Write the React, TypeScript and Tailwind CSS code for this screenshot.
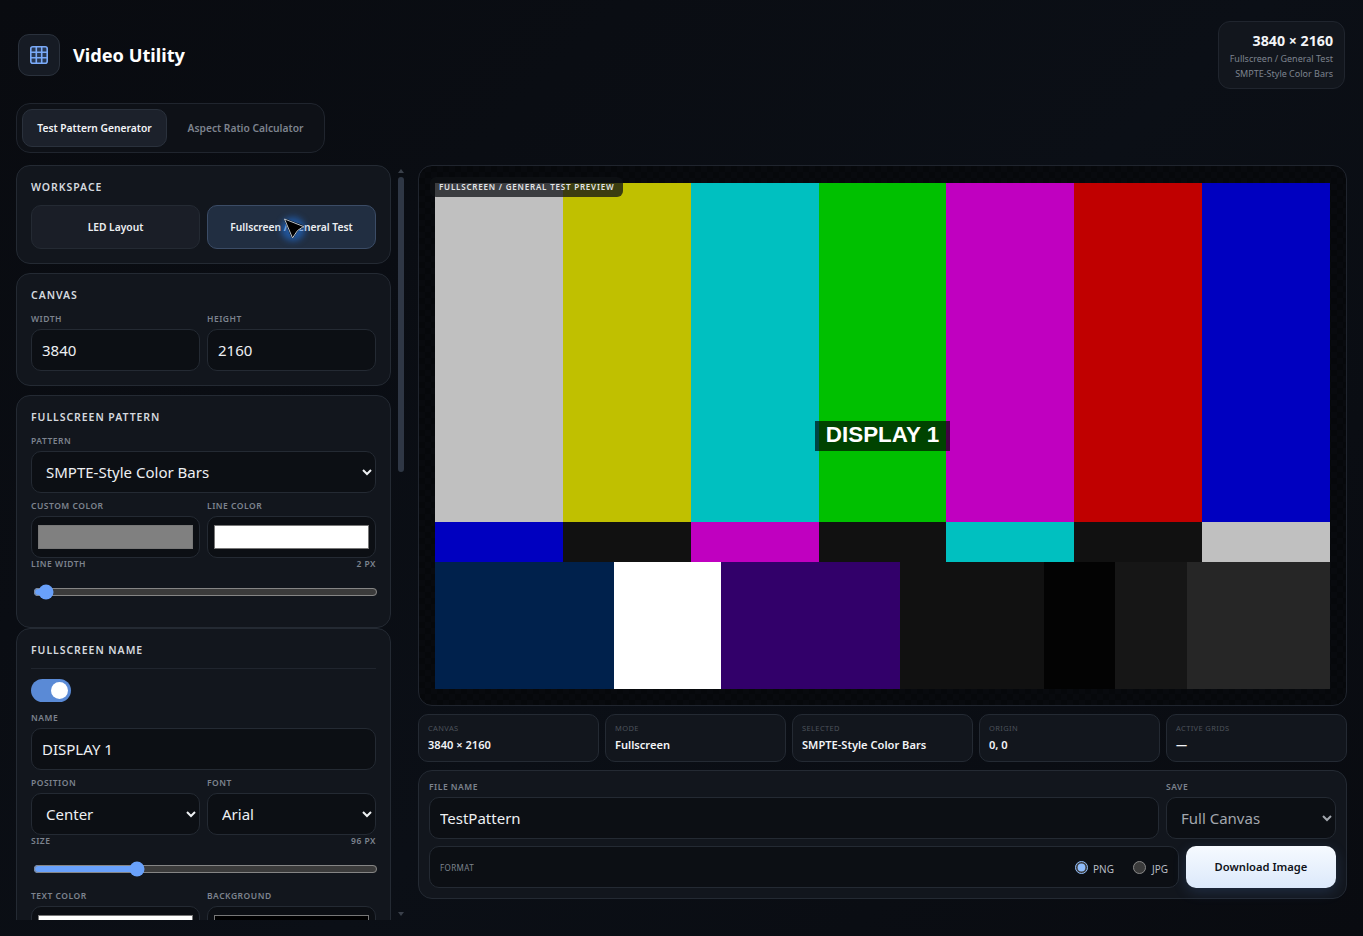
import React from "react";

const label = "block text-[8.5px] leading-[12px] font-semibold tracking-[0.06em] uppercase text-[#7d838e]";
const card = "rounded-[14px] border border-[#242a33] bg-[#12161d] px-[14px] shrink-0";
const fieldBase = "w-full h-[42px] rounded-[10px] border border-[#242a33] bg-[#0c0f14] text-[15px] outline-none";
const field = `${fieldBase} text-[#eef0f3]`;
const heading = "text-[10.5px] leading-[14px] font-semibold tracking-[0.09em] uppercase text-[#d5d9df]";
const slider = "mt-[14px] ml-[2px] block w-[345px] accent-[#69a1fb]";

function Swatch({ color, className = "" }: { color: string; className?: string }) {
  return (
    <div className={`h-[42px] rounded-[10px] border border-[#242a33] bg-[#0c0f14] px-[6px] py-[8px] ${className}`}>
      <div className="h-full w-full border border-[#777]" style={{ background: color }} />
    </div>
  );
}

function Stat({ k, v }: { k: string; v: string }) {
  return (
    <div className="h-[48px] flex-1 rounded-[10px] border border-[#242a33] bg-[#12161d] px-[9px] pt-[7px]">
      <div className="text-[7.5px] leading-[12px] tracking-[0.05em] uppercase text-[#4c525b]">{k}</div>
      <div className="mt-[3px] text-[11.1px] leading-[16px] font-semibold text-[#f2f4f7]">{v}</div>
    </div>
  );
}

const top = ["#c0c0c0", "#c0c000", "#00c0c0", "#00c000", "#c000c0", "#c00000", "#0000c0"];
const mid = ["#0000c0", "#111111", "#c000c0", "#111111", "#00c0c0", "#111111", "#c0c0c0"];
const bottom: [string, number][] = [
  ["#00214c", 5],
  ["#ffffff", 3],
  ["#32006a", 5],
  ["#111111", 4],
  ["#030303", 2],
  ["#161616", 2],
  ["#262626", 4],
];

export default function App() {
  return (
    <div className="h-[936px] w-[1363px] overflow-hidden bg-[linear-gradient(135deg,#090b10_0%,#0b0f16_55%,#090b10_100%)] font-['Noto_Sans',sans-serif] text-[#f2f4f7] [color-scheme:dark]">
      <header className="flex items-start justify-between pl-[18px] pr-[18px] pt-[21px]">
        <div className="mt-[13px] flex items-center gap-[13px]">
          <div className="flex h-[42px] w-[42px] items-center justify-center rounded-[11px] border border-[#2a313c] bg-[#161b24]">
            <svg width="18" height="18" viewBox="0 0 18 18" fill="none" stroke="#7aaaf8" strokeWidth="1.6">
              <rect x="0.8" y="0.8" width="16.4" height="16.4" rx="2" fill="#6ba0f5" fillOpacity="0.22" />
              <path d="M6.3 1v16M11.7 1v16M1 6.3h16M1 11.7h16" />
            </svg>
          </div>
          <h1 className="-mt-[1px] text-[18.2px] leading-[28px] font-bold text-white">Video Utility</h1>
        </div>
        <div className="h-[68px] w-[127px] rounded-[12px] border border-[#20252e] bg-[#12161d] pr-[11px] pt-[9px] text-right">
          <div className="text-[14.2px] leading-[20px] font-bold text-[#f2f4f7]">3840 × 2160</div>
          <div className="text-[9px] leading-[15px] text-[#7d838e]">Fullscreen / General Test</div>
          <div className="text-[9px] leading-[15px] text-[#7d838e]">SMPTE-Style Color Bars</div>
        </div>
      </header>

      <nav className="ml-[16px] mt-[14px] flex h-[50px] w-[309px] items-center gap-[5px] rounded-[14px] border border-[#20252e] bg-[#0e1117] px-[5px]">
        <button className="h-[38px] w-[145px] shrink-0 rounded-[10px] border border-[#2a313c] bg-[#1c212b] pt-[1px] text-[10.25px] font-semibold text-[#f2f4f7]">
          Test Pattern Generator
        </button>
        <button className="h-[38px] flex-1 rounded-[10px] pt-[1px] text-[10.25px] font-semibold text-[#7d838e]">
          Aspect Ratio Calculator
        </button>
      </nav>

      <main className="mt-[12px] flex items-start">
        <div className="ml-[16px] flex h-[755px] w-[390px] shrink-0 gap-[7px]">
          <aside className="flex h-full w-[375px] shrink-0 flex-col gap-[9px] overflow-hidden">
            <section className={`${card} h-[99px] pt-[14px]`}>
              <h2 className={heading}>Workspace</h2>
              <div className="mt-[11px] grid grid-cols-2 gap-[7px]">
                <button className="h-[44px] rounded-[10px] border border-[#242a33] bg-[#1a1e27] pt-[1px] text-[10.25px] font-semibold text-[#eceef1]">
                  LED Layout
                </button>
                <button className="h-[44px] rounded-[10px] border border-[#3b4c66] bg-[#212e41] pt-[1px] text-[10.25px] font-semibold text-[#eceef1]">
                  Fullscreen / General Test
                </button>
              </div>
            </section>

            <section className={`${card} h-[113px] pt-[14px]`}>
              <h2 className={heading}>Canvas</h2>
              <div className="mt-[11px] grid grid-cols-2 gap-[7px]">
                <div>
                  <label className={label}>Width</label>
                  <input readOnly value="3840" className={`${field} mt-[4px] px-[10px]`} />
                </div>
                <div>
                  <label className={label}>Height</label>
                  <input readOnly value="2160" className={`${field} mt-[4px] px-[10px]`} />
                </div>
              </div>
            </section>

            <section className={`${card} h-[233px] pt-[14px]`}>
              <h2 className={heading}>Fullscreen Pattern</h2>
              <label className={`${label} mt-[11px]`}>Pattern</label>
              <select className={`${field} mt-[4px] px-[10px]`}>
                <option>SMPTE-Style Color Bars</option>
              </select>
              <div className="mt-[7px] grid grid-cols-2 gap-[7px]">
                <div>
                  <label className={label}>Custom Color</label>
                  <Swatch color="#808080" className="mt-[4px]" />
                </div>
                <div>
                  <label className={label}>Line Color</label>
                  <Swatch color="#ffffff" className="mt-[4px]" />
                </div>
              </div>
              <div className="flex justify-between">
                <span className={label}>Line Width</span>
                <span className={label}>2 px</span>
              </div>
              <input type="range" readOnly min={0} max={187} value={3} className={slider} />
            </section>

            <section className={`${card} -mt-[9px] h-[700px] pt-[14px]`}>
              <h2 className={`${heading} border-b border-[#20252e] pb-[11px]`}>Fullscreen Name</h2>
              <div className="relative mt-[10px] h-[23px] w-[40px] rounded-full bg-[#5a8ad6]">
                <div className="absolute right-[3px] top-[3px] h-[17px] w-[17px] rounded-full bg-white" />
              </div>
              <label className={`${label} mt-[10px]`}>Name</label>
              <input readOnly value="DISPLAY 1" className={`${field} mt-[4px] px-[10px]`} />
              <div className="mt-[7px] grid grid-cols-2 gap-[7px]">
                <div>
                  <label className={label}>Position</label>
                  <select className={`${field} mt-[4px] px-[10px]`}>
                    <option>Center</option>
                  </select>
                </div>
                <div>
                  <label className={label}>Font</label>
                  <select className={`${field} mt-[4px] px-[10px]`}>
                    <option>Arial</option>
                  </select>
                </div>
              </div>
              <div className="flex justify-between">
                <span className={label}>Size</span>
                <span className={label}>96 px</span>
              </div>
              <input type="range" readOnly min={0} max={328} value={96} className={slider} />
              <div className="mt-[13px] grid grid-cols-2 gap-[7px]">
                <div>
                  <label className={label}>Text Color</label>
                  <Swatch color="#ffffff" className="mt-[4px]" />
                </div>
                <div>
                  <label className={label}>Background</label>
                  <Swatch color="#000000" className="mt-[4px]" />
                </div>
              </div>
            </section>
          </aside>

          <div className="flex h-full w-[6px] shrink-0 flex-col items-center pt-[4px]">
            <svg width="6" height="4" viewBox="0 0 6 4"><path d="M3 0L6 4H0Z" fill="#3a404a" /></svg>
            <div className="mt-[4px] h-[295px] w-[6px] rounded-full bg-[#2f3745]" />
            <div className="flex-1" />
            <svg className="mb-[4px]" width="6" height="4" viewBox="0 0 6 4"><path d="M0 0H6L3 4Z" fill="#3a404a" /></svg>
          </div>
        </div>

        <div className="ml-[12px] flex w-[929px] shrink-0 flex-col gap-[8px]">
          <section className="relative h-[541px] rounded-[14px] border border-[#20252e] bg-[repeating-conic-gradient(#080a0e_0_25%,#06080b_0_50%)] bg-[length:12px_12px] pb-[16px] pl-[16px] pr-[16px] pt-[17px]">
            <div className="absolute left-[11px] top-[11px] z-10 flex h-[20px] items-center rounded-[6px] bg-[#0f1116]/75 px-[9px] text-[8px] font-semibold tracking-[0.1em] uppercase text-[#e2e4e8]">
              Fullscreen / General Test Preview
            </div>
            <div className="relative flex h-[506px] flex-col font-['Liberation_Sans',sans-serif]">
              <div className="flex h-[339px]">
                {top.map((c, i) => (
                  <div key={i} className="flex-1" style={{ background: c }} />
                ))}
              </div>
              <div className="flex h-[40px]">
                {mid.map((c, i) => (
                  <div key={i} className="flex-1" style={{ background: c }} />
                ))}
              </div>
              <div className="flex h-[127px]">
                {bottom.map(([c, g], i) => (
                  <div key={i} style={{ background: c, flexGrow: g, flexBasis: 0 }} />
                ))}
              </div>
              <div className="absolute left-[380px] top-[238px] flex h-[30px] w-[135px] items-center justify-center bg-black/65 pb-[2px] text-[22.4px] font-bold text-white">
                DISPLAY 1
              </div>
            </div>
          </section>

          <div className="flex gap-[6px]">
            <Stat k="Canvas" v="3840 × 2160" />
            <Stat k="Mode" v="Fullscreen" />
            <Stat k="Selected" v="SMPTE-Style Color Bars" />
            <Stat k="Origin" v="0, 0" />
            <Stat k="Active Grids" v="—" />
          </div>

          <section className="h-[129px] rounded-[14px] border border-[#242a33] bg-[#12161d] px-[10px] pt-[10px]">
            <div className="flex gap-[7px]">
              <div className="flex-1">
                <label className={label}>File Name</label>
                <input readOnly value="TestPattern" className={`${field} mt-[4px] px-[10px]`} />
              </div>
              <div className="w-[170px]">
                <label className={label}>Save</label>
                <select className={`${fieldBase} mt-[4px] px-[10px] text-[#a3a7ae]`}>
                  <option>Full Canvas</option>
                </select>
              </div>
            </div>
            <div className="mt-[7px] flex gap-[7px]">
              <div className="flex h-[42px] flex-1 items-center justify-between rounded-[10px] border border-[#242a33] bg-[#0c0f14] pl-[10px] pr-[10px]">
                <span className="pt-[1px] text-[8px] tracking-[0.05em] uppercase text-[#7d838e]">Format</span>
                <div className="flex items-center gap-[19px] text-[10px] text-[#b9bdc4]">
                  <label className="flex items-center gap-[5px]">
                    <input type="radio" name="fmt" defaultChecked className="m-0 h-[13px] w-[13px] accent-[#8fbcfb]" />
                    <span className="pt-[5px]">PNG</span>
                  </label>
                  <label className="flex items-center gap-[6px]">
                    <input type="radio" name="fmt" className="m-0 h-[13px] w-[13px]" />
                    <span className="pt-[5px]">JPG</span>
                  </label>
                </div>
              </div>
              <button className="h-[42px] w-[150px] rounded-[10px] bg-[linear-gradient(180deg,#f6faff,#dce9fb)] pt-[1px] text-[11.2px] font-semibold text-[#10131a] shadow-[0_4px_14px_rgba(90,140,220,0.2)]">
                Download Image
              </button>
            </div>
          </section>
        </div>
      </main>

      <div className="pointer-events-none absolute left-[281px] top-[217px] h-[24px] w-[24px] rounded-full bg-[#1f6fd8]/60 blur-[3px]" />
      <svg className="pointer-events-none absolute left-[283px] top-[218px]" width="22" height="22" viewBox="0 0 22 22">
        <path d="M3 2.5 L19 8.5 L14 11.5 L9.5 18.5 Z" fill="#000" stroke="#000" strokeWidth="3" strokeLinejoin="round" />
        <path d="M1.5 1 L20.5 8.5 L14.5 12.5 L9.5 20 Z" fill="none" stroke="#b9c2cc" strokeWidth="1" strokeLinejoin="round" />
      </svg>
    </div>
  );
}
